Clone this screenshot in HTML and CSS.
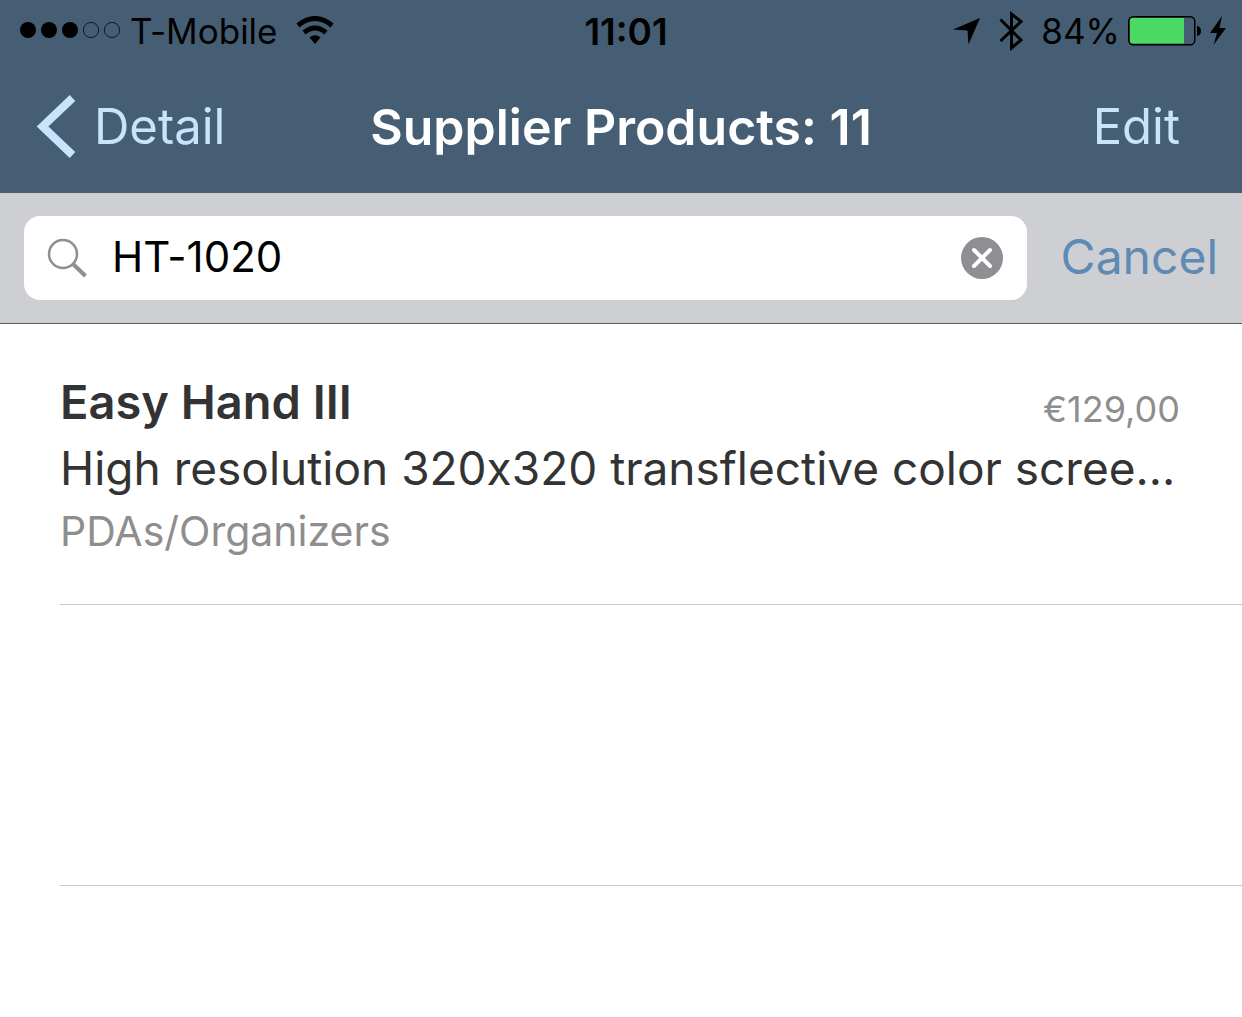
FILE: index.html
```html
<!DOCTYPE html>
<html lang="en">
<head>
<meta charset="utf-8">
<meta name="viewport" content="width=device-width, initial-scale=1">
<title>Supplier Products</title>
<link rel="stylesheet" href="styles.css">
</head>
<body>
<header class="top">
  <div class="status">
    <div class="status-side">
      <svg class="signal" width="100" height="18" viewBox="0 0 100 18" aria-hidden="true">
        <circle cx="8" cy="8" r="8"/><circle cx="29" cy="8" r="8"/><circle cx="50" cy="8" r="8"/>
        <circle class="ring" cx="71" cy="8" r="7.6"/><circle class="ring" cx="92" cy="8" r="7.6"/>
      </svg>
      <span class="carrier">T-Mobile</span>
      <svg class="wifi" width="38" height="30" viewBox="0 0 38 30" aria-hidden="true">
        <path class="arc" d="M2 9.500Q19 -4.500 36 9.500M8 16.500Q19 7.500 30 16.500"/>
        <path d="M19 28L13.500 21.500Q19 17 24.500 21.500Z"/>
      </svg>
    </div>
    <time class="clock">11:01</time>
    <div class="status-side status-end">
      <svg class="locate" width="28" height="28" viewBox="0 0 28 28" aria-hidden="true"><path d="M27 1L15.500 27.500L14.500 13.500L0 12.500Z"/></svg>
      <svg class="bluetooth" width="24" height="42" viewBox="0 0 24 42" aria-hidden="true"><path d="M1.500 9.500L22 30L12.500 38V4L22 11.500L1.500 31"/></svg>
      <span class="percent">84%</span>
      <svg class="battery" width="74" height="30" viewBox="0 0 74 30" aria-hidden="true">
        <rect class="shell" x="0.750" y="0.750" width="66" height="28" rx="4.500"/>
        <path class="charge" d="M4.500 2H56V27.500H4.500Q2 27.500 2 25V4.500Q2 2 4.500 2Z"/>
        <path d="M69 10Q73 10.500 73 15T69 20Z"/>
      </svg>
      <svg class="bolt" width="16" height="30" viewBox="0 0 16 30" aria-hidden="true"><path d="M12 0L0 17H7L3.500 29L16 12H9.500Z"/></svg>
    </div>
  </div>
  <nav class="nav">
    <a class="nav-link back" href="#detail">
      <svg width="40" height="64" viewBox="0 0 40 64" aria-hidden="true"><path d="M36.500 3L6.500 31.500L36.500 60"/></svg>
      Detail
    </a>
    <h1 class="title">Supplier Products: 11</h1>
    <button class="nav-link edit" type="button">Edit</button>
  </nav>
</header>
<form class="search" role="search">
  <div class="field">
    <svg width="42" height="42" viewBox="0 0 42 42" aria-hidden="true"><circle cx="17" cy="17" r="14"/><path class="handle" d="M27 27L39.500 39"/></svg>
    <input class="query" type="text" value="HT-1020" aria-label="Search products">
    <button class="clear" type="button" aria-label="Clear text">
      <svg width="42" height="42" viewBox="0 0 42 42" aria-hidden="true"><circle cx="21" cy="21" r="21"/><path d="M13 13L29 29M29 13L13 29"/></svg>
    </button>
  </div>
  <button class="cancel" type="button">Cancel</button>
</form>
<main>
  <ul class="products">
    <li class="product">
      <div class="heading">
        <h2 class="name">Easy Hand III</h2>
        <span class="price">€129,00</span>
      </div>
      <p class="description">High resolution 320x320 transflective color scree…</p>
      <p class="category">PDAs/Organizers</p>
    </li>
    <li class="product"></li>
  </ul>
</main>
</body>
</html>
```
FILE: styles.css
```css
* { box-sizing: border-box; }
body {
  margin: 0;
  background: #fff;
  color: #333;
  font-family: Inter, "Liberation Sans", sans-serif;
  font-feature-settings: "calt" 0;
}
h1, h2, p, ul { margin: 0; padding: 0; }
button {
  border: 0;
  padding: 0;
  background: none;
  font: inherit;
  cursor: pointer;
}
svg { display: block; flex: none; }

.top {
  background: #455e74;
  border-bottom: 1px solid #555c66;
}
.status {
  display: grid;
  grid-template-columns: 1fr auto 1fr;
  align-items: center;
  height: 62px;
  padding: 0 16px 0 20px;
  color: #000;
  font-size: 35px;
}
.status-side { display: flex; align-items: center; }
.status-end { justify-content: flex-end; }
.ring { fill: none; stroke: #0b1a30; stroke-width: 1; }
.carrier { margin: 0 18px 0 10px; }
.arc { fill: none; stroke: #000; stroke-width: 5; }
.clock {
  padding-left: 6px;
  font-size: 37px;
  font-weight: 600;
  font-feature-settings: "calt" 1;
}
.locate { margin-right: 18px; }
.bluetooth { margin-right: 18px; }
.bluetooth path { fill: none; stroke: #000; stroke-width: 3; }
.percent { margin-right: 8px; }
.battery { margin-right: 8px; }
.shell { fill: none; stroke: #000; stroke-width: 1.5; }
.charge { fill: #4cd964; }

.nav {
  display: grid;
  grid-template-columns: 1fr auto 1fr;
  align-items: center;
  height: 130px;
  padding: 0 36px;
  font-size: 49px;
  line-height: 60px;
}
.nav-link {
  color: #c8e3fc;
  font-weight: 400;
  text-decoration: none;
}
.back {
  display: flex;
  align-items: center;
  justify-self: start;
  gap: 18px;
}
.back path { fill: none; stroke: #c8e3fc; stroke-width: 8; }
.title {
  color: #fff;
  font-size: 50px;
  font-weight: 600;
}
.edit { justify-self: end; margin-right: 26px; }

.search {
  display: flex;
  align-items: center;
  gap: 34px;
  height: 131px;
  padding: 0 24px;
  background: #cecfd3;
  border-bottom: 1px solid #5a5b60;
}
.field {
  display: flex;
  align-items: center;
  flex: 1;
  min-width: 0;
  height: 84px;
  padding: 0 24px 0 22px;
  background: #fff;
  border-radius: 16px;
}
.field > svg { fill: none; stroke: #8e8e93; stroke-width: 2.5; }
.field .handle { stroke-width: 4; }
.query {
  flex: 1;
  min-width: 0;
  height: 60px;
  margin: 0 24px;
  padding: 0 0 4px;
  border: 0;
  outline: 0;
  background: none;
  color: #000;
  font: 42px Inter, "Liberation Sans", sans-serif;
  font-feature-settings: inherit;
}
.clear circle { fill: #8e8e93; }
.clear path { stroke: #fff; stroke-width: 4; stroke-linecap: round; }
.cancel {
  padding-bottom: 4px;
  color: #5e8ab4;
  font-size: 48px;
}

.products { list-style: none; padding-left: 60px; }
.product {
  height: 281px;
  padding: 46px 62px 0 0;
  border-bottom: 1px solid #c8c7cc;
}
.heading {
  display: flex;
  align-items: flex-end;
  justify-content: space-between;
  line-height: 64px;
}
.name { font-size: 47px; font-weight: 600; }
.price { color: #8e8e8e; font-size: 36px; line-height: 50px; }
.description {
  font-size: 46px;
  line-height: 68px;
  white-space: nowrap;
}
.category {
  color: #8e8e8e;
  font-size: 41px;
  line-height: 58px;
}
```
